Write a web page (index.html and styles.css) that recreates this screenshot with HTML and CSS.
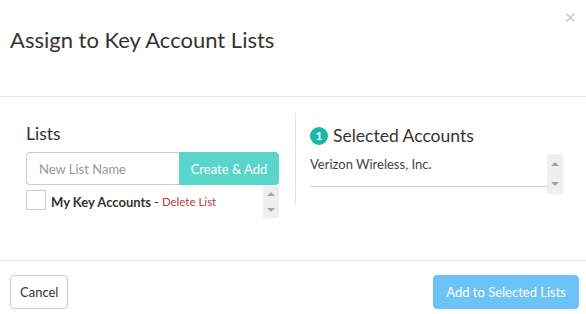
FILE: index.html
```html
<!DOCTYPE html>
<html lang="en">
  <head>
    <meta charset="UTF-8" />
    <meta name="viewport" content="width=device-width, initial-scale=1.0" />
    <title>Assign to Key Account Lists</title>
    <link rel="stylesheet" href="styles.css">
  </head>
  <body>
    <div class="modal">
      <div class="modal-header">
        <h1>Assign to Key Account Lists</h1>
        <span class="close">&times;</span>
      </div>

      <div class="modal-body">
        <div class="col col-left">
          <h2>Lists</h2>
          <div class="add-row">
            <input type="text" placeholder="New List Name" />
            <button class="btn-create">Create &amp; Add</button>
          </div>
          <div class="list-box">
            <div class="list-item">
              <span class="checkbox"></span>
              <span class="list-name">My Key Accounts</span>
              <span class="dash">-</span>
              <a class="delete-link">Delete List</a>
            </div>
            <div class="scroller">
              <span class="arrow-up"></span>
              <span class="arrow-down"></span>
            </div>
          </div>
        </div>

        <div class="col col-right">
          <h2 class="selected-title"><span class="badge">1</span>Selected Accounts</h2>
          <div class="account-box">
            <div class="account-list">Verizon Wireless, Inc.</div>
            <div class="scroller tall">
              <span class="arrow-up"></span>
              <span class="arrow-down"></span>
            </div>
          </div>
        </div>
      </div>

      <div class="modal-footer">
        <button class="btn-cancel">Cancel</button>
        <button class="btn-add">Add to Selected Lists</button>
      </div>
    </div>
  </body>
</html>
```

FILE: styles.css
```css
body {
  margin: 0;
  font-family: Lato, "Open Sans", sans-serif;
  color: #333;
  background-color: #fff;
}

.modal {
  width: 586px;
  height: 314px;
}

.modal-header {
  position: relative;
  height: 97px;
  padding: 0 10px;
  border-bottom: 1px solid #e5e5e5;
  box-sizing: border-box;
}

.modal-header h1 {
  margin: 0;
  padding-top: 26px;
  font-size: 22px;
  font-weight: normal;
  color: #333;
}

.close {
  position: absolute;
  top: 4px;
  right: 10px;
  font-size: 20px;
  color: #c8c8c8;
}

.modal-body {
  display: flex;
  height: 163px;
  padding: 16px 23px 0 26px;
  box-sizing: border-box;
}

.col {
  width: 253px;
}

.col-left {
  padding-right: 16px;
  border-right: 1px solid #e5e5e5;
  height: 92px;
}

.col-right {
  padding-left: 14px;
}

h2 {
  margin: 10px 0 8px;
  font-size: 17.5px;
  font-weight: normal;
  color: #333;
  display: flex;
  align-items: center;
}

h2.selected-title {
  margin: 12px 0 8px;
}

.add-row {
  display: flex;
  height: 33px;
}

.add-row input {
  width: 153px;
  box-sizing: border-box;
  border: 1px solid #ccc;
  border-right: none;
  border-radius: 4px 0 0 4px;
  padding: 0 12px;
  font-family: inherit;
  font-size: 13px;
  color: #333;
}

.add-row input::placeholder {
  color: #999;
}

.btn-create {
  flex: 1;
  border: none;
  border-radius: 0 4px 4px 0;
  background-color: #5ad5cb;
  color: #fff;
  font-family: inherit;
  font-size: 13px;
}

.list-box {
  display: flex;
  justify-content: space-between;
  margin-top: 1px;
}

.list-item {
  display: flex;
  align-items: flex-end;
  padding-top: 4px;
  height: 20px;
}

.checkbox {
  width: 18px;
  height: 18px;
  border: 1px solid #ccc;
  margin-right: 5px;
}

.list-name {
  font-size: 13px;
  font-weight: bold;
  color: #333;
  line-height: 16px;
}

.dash {
  margin: 0 3px;
  font-size: 13px;
  color: #333;
  line-height: 16px;
}

.delete-link {
  font-size: 11.5px;
  color: #b93a3a;
  line-height: 16px;
}

.scroller {
  width: 16px;
  height: 32px;
  background-color: #efefef;
  display: flex;
  flex-direction: column;
  justify-content: space-around;
  align-items: center;
}

.scroller.tall {
  height: 40px;
}

.arrow-up {
  border: 4px solid transparent;
  border-top: none;
  border-bottom: 4px solid #a3a3a3;
}

.arrow-down {
  border: 4px solid transparent;
  border-bottom: none;
  border-top: 4px solid #a3a3a3;
}

.badge {
  display: inline-flex;
  justify-content: center;
  align-items: center;
  width: 18px;
  height: 18px;
  border-radius: 50%;
  background-color: #16b9a8;
  color: #fff;
  font-size: 12px;
  font-weight: bold;
  margin-right: 5px;
}

.account-box {
  display: flex;
  align-items: flex-start;
}

.account-list {
  width: 237px;
  height: 30px;
  padding-top: 2px;
  border-bottom: 1px solid #ccc;
  font-size: 13px;
  color: #444;
}

.modal-footer {
  display: flex;
  justify-content: space-between;
  padding: 14px 7px 0 10px;
  border-top: 1px solid #e5e5e5;
  height: 54px;
  box-sizing: border-box;
}

.modal-footer button {
  height: 34px;
  border-radius: 4px;
  font-family: inherit;
  font-size: 13px;
  padding: 0 12px;
}

.modal-footer .btn-cancel {
  padding: 0 9px;
  background-color: #fff;
  border: 1px solid #ccc;
  color: #333;
}

.btn-add {
  background-color: #6cc3f7;
  border: 1px solid #6cc3f7;
  color: #fff;
}
```
